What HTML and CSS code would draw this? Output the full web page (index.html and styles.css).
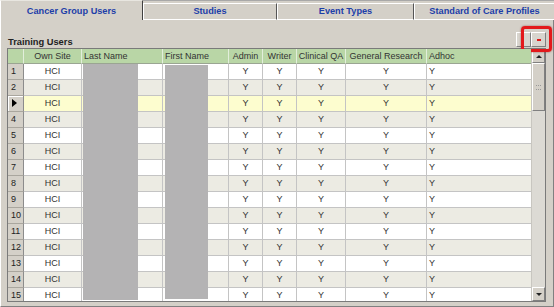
FILE: index.html
```html
<!DOCTYPE html>
<html lang="en">
<head>
    <meta charset="UTF-8">
    <title>Cancer Group Users</title>
    <link rel="stylesheet" href="styles.css">
</head>
<body>

    <!-- TABS -->
    <div class="tabs">
        <div class="tab active">Cancer Group Users</div>
        <div class="tab">Studies</div>
        <div class="tab">Event Types</div>
        <div class="tab">Standard of Care Profiles</div>
    </div>

    <!-- PANEL -->
    <div class="panel">
        <div class="panel-head">
            <span class="title">Training Users</span>
            <div class="tools">
                <div class="tool"></div>
                <div class="tool"><span class="dash"></span></div>
                <div class="highlight"></div>
            </div>
        </div>

        <!-- GRID -->
        <div class="grid">
            <div class="table-wrap">
                <table class="users">
                    <colgroup>
                        <col class="c-num"><col class="c-site"><col class="c-last"><col class="c-first">
                        <col class="c-admin"><col class="c-writer"><col class="c-qa"><col class="c-gr"><col class="c-adhoc">
                    </colgroup>
                    <thead>
                        <tr>
                            <th></th><th>Own Site</th><th class="left">Last Name</th><th class="left">First Name</th>
                            <th>Admin</th><th>Writer</th><th>Clinical QA</th><th>General Research</th><th class="left">Adhoc</th>
                        </tr>
                    </thead>
                    <tbody>
                        <tr><td class="num">1</td><td>HCI</td><td></td><td></td><td>Y</td><td>Y</td><td>Y</td><td>Y</td><td class="left">Y</td></tr>
                        <tr class="alt"><td class="num">2</td><td>HCI</td><td></td><td></td><td>Y</td><td>Y</td><td>Y</td><td>Y</td><td class="left">Y</td></tr>
                        <tr class="sel"><td class="num"><span class="arrow"></span></td><td>HCI</td><td></td><td></td><td>Y</td><td>Y</td><td>Y</td><td>Y</td><td class="left">Y</td></tr>
                        <tr class="alt"><td class="num">4</td><td>HCI</td><td></td><td></td><td>Y</td><td>Y</td><td>Y</td><td>Y</td><td class="left">Y</td></tr>
                        <tr><td class="num">5</td><td>HCI</td><td></td><td></td><td>Y</td><td>Y</td><td>Y</td><td>Y</td><td class="left">Y</td></tr>
                        <tr class="alt"><td class="num">6</td><td>HCI</td><td></td><td></td><td>Y</td><td>Y</td><td>Y</td><td>Y</td><td class="left">Y</td></tr>
                        <tr><td class="num">7</td><td>HCI</td><td></td><td></td><td>Y</td><td>Y</td><td>Y</td><td>Y</td><td class="left">Y</td></tr>
                        <tr class="alt"><td class="num">8</td><td>HCI</td><td></td><td></td><td>Y</td><td>Y</td><td>Y</td><td>Y</td><td class="left">Y</td></tr>
                        <tr><td class="num">9</td><td>HCI</td><td></td><td></td><td>Y</td><td>Y</td><td>Y</td><td>Y</td><td class="left">Y</td></tr>
                        <tr class="alt"><td class="num">10</td><td>HCI</td><td></td><td></td><td>Y</td><td>Y</td><td>Y</td><td>Y</td><td class="left">Y</td></tr>
                        <tr><td class="num">11</td><td>HCI</td><td></td><td></td><td>Y</td><td>Y</td><td>Y</td><td>Y</td><td class="left">Y</td></tr>
                        <tr class="alt"><td class="num">12</td><td>HCI</td><td></td><td></td><td>Y</td><td>Y</td><td>Y</td><td>Y</td><td class="left">Y</td></tr>
                        <tr><td class="num">13</td><td>HCI</td><td></td><td></td><td>Y</td><td>Y</td><td>Y</td><td>Y</td><td class="left">Y</td></tr>
                        <tr class="alt"><td class="num">14</td><td>HCI</td><td></td><td></td><td>Y</td><td>Y</td><td>Y</td><td>Y</td><td class="left">Y</td></tr>
                        <tr><td class="num">15</td><td>HCI</td><td></td><td></td><td>Y</td><td>Y</td><td>Y</td><td>Y</td><td class="left">Y</td></tr>
                    </tbody>
                </table>
                <!-- blanked-out names -->
                <div class="redact redact-last"></div>
                <div class="redact redact-first"></div>
            </div>

            <!-- SCROLLBAR -->
            <div class="vscroll">
                <div class="sbtn"><span class="up"></span></div>
                <div class="thumb"><span class="grip"></span></div>
                <div class="track"></div>
                <div class="sbtn"><span class="down"></span></div>
            </div>
        </div>
    </div>

</body>
</html>
```

FILE: styles.css
```css
body {
    margin: 0;
    width: 554px;
    height: 307px;
    overflow: hidden;
    background: #d4d0c8;
    font-family: "Liberation Sans", Arial, sans-serif;
    font-size: 9px;
    color: #333;
}

/* TABS */
.tabs {
    display: flex;
    height: 20px;
    border-top: 1px solid #a8a8a8;
    box-sizing: border-box;
}

.tab {
    box-sizing: border-box;
    margin-top: 2px;
    height: 17px;
    line-height: 15px;
    text-align: center;
    font-weight: bold;
    font-size: 9.2px;
    color: #1d3ea8;
    border-top: 1px solid #fff;
    border-left: 1px solid #fff;
    border-right: 1px solid #555;
    border-bottom: 1px solid #fff;
}

.tab:nth-child(1) { width: 143px; }
.tab:nth-child(2) { width: 134px; }
.tab:nth-child(3) { width: 137px; }
.tab:nth-child(4) { width: 140px; border-right: none; }

.tab.active {
    margin-top: -1px;
    height: 20px;
    line-height: 21px;
    border-top: 1px solid #e8e6e0;
    border-bottom: none;
    border-right: 1px solid #404040;
}

/* PANEL */
.panel {
    height: 287px;
    box-sizing: border-box;
    padding: 0 7px 2px 6px;
    border-left: 1px solid #fff;
    border-right: 1px solid #808080;
    border-bottom: 1px solid #808080;
}

.panel-head {
    height: 28px;
    display: flex;
    align-items: flex-end;
    justify-content: space-between;
}

.title {
    font-weight: bold;
    font-size: 9.3px;
    color: #222;
    padding-left: 1px;
    padding-bottom: 1px;
}

.tools {
    position: relative;
    display: flex;
    margin-bottom: 1px;
}

.tool {
    width: 13px;
    height: 13px;
    background: #d8d5ce;
    border-top: 1px solid #fff;
    border-left: 1px solid #fff;
    border-right: 1px solid #808080;
    border-bottom: 1px solid #808080;
    display: flex;
    align-items: center;
    justify-content: center;
}

.dash {
    width: 4px;
    height: 2px;
    background: #e01818;
}

/* red call-out drawn over the toolbar */
.highlight {
    position: absolute;
    left: 5px;
    top: -6px;
    width: 25px;
    height: 20px;
    border: 3px solid #e3191b;
    border-radius: 4px;
    box-shadow: 0 0 2px rgba(120, 0, 0, 0.6);
}

/* GRID */
.grid {
    display: flex;
    height: 254px;
    box-sizing: border-box;
    border: 1px solid #7a7a7a;
    background: #fff;
    overflow: hidden;
}

.table-wrap {
    position: relative;
    width: 524px;
    overflow: hidden;
}

.users {
    table-layout: fixed;
    border-collapse: separate;
    border-spacing: 0;
    width: 524px;
    font-size: 9px;
}

.c-num { width: 16px; }
.c-site { width: 58px; }
.c-last { width: 81px; }
.c-first { width: 66px; }
.c-admin { width: 34px; }
.c-writer { width: 34px; }
.c-qa { width: 49px; }
.c-gr { width: 81px; }
.c-adhoc { width: 105px; }

.users th {
    height: 14px;
    padding: 0;
    font-weight: normal;
    text-align: center;
    white-space: nowrap;
    overflow: hidden;
    color: #333;
    background: #b9d6a6;
    border-right: 1px solid #e2eedb;
    border-bottom: 1px solid #9aa592;
}

.users td {
    height: 15px;
    padding: 0;
    line-height: 15px;
    text-align: center;
    white-space: nowrap;
    border-right: 1px solid #c4c4c4;
    border-bottom: 1px solid #c4c4c4;
}

.users th.left,
.users td.left {
    text-align: left;
    padding-left: 2px;
}

.users tr.alt td { background: #ecebe3; }
.users tr.sel td { background: #fdfdcf; }

.users td.num {
    text-align: left;
    padding-left: 3px;
    background: #d4d0c8;
    border-right: 1px solid #8c8c8c;
    border-bottom: 1px solid #a9a69e;
    color: #222;
}

.users tr.alt td.num,
.users tr.sel td.num { background: #d4d0c8; }

.users tr.sel td.num {
    box-shadow: inset 1px 1px 0 #fff;
}

.arrow {
    display: inline-block;
    width: 0;
    height: 0;
    margin-left: 1px;
    border-left: 5px solid #000;
    border-top: 4px solid transparent;
    border-bottom: 4px solid transparent;
    vertical-align: -1px;
}

.redact {
    position: absolute;
    background: #b4b3b4;
}

.redact-last {
    left: 75px;
    top: 15px;
    width: 55px;
    height: 236px;
}

.redact-first {
    left: 157px;
    top: 16px;
    width: 43px;
    height: 234px;
}

/* SCROLLBAR */
.vscroll {
    width: 13px;
    display: flex;
    flex-direction: column;
    background: #dcdad4;
    border-left: 1px solid #c8c6c0;
}

.sbtn {
    height: 12px;
    flex: none;
    background: #d4d0c8;
    border-top: 1px solid #fff;
    border-left: 1px solid #fff;
    border-right: 1px solid #808080;
    border-bottom: 1px solid #808080;
    display: flex;
    align-items: center;
    justify-content: center;
}

.up,
.down {
    width: 0;
    height: 0;
    border-left: 3px solid transparent;
    border-right: 3px solid transparent;
}

.up { border-bottom: 3px solid #222; }
.down { border-top: 3px solid #222; }

.thumb {
    height: 46px;
    flex: none;
    background: #d4d0c8;
    border-top: 1px solid #fff;
    border-left: 1px solid #fff;
    border-right: 1px solid #808080;
    border-bottom: 1px solid #808080;
    display: flex;
    align-items: center;
    justify-content: center;
}

.grip {
    width: 5px;
    height: 3px;
    border-top: 1px dotted #999;
    border-bottom: 1px dotted #999;
}

.track {
    flex: 1;
}
```
